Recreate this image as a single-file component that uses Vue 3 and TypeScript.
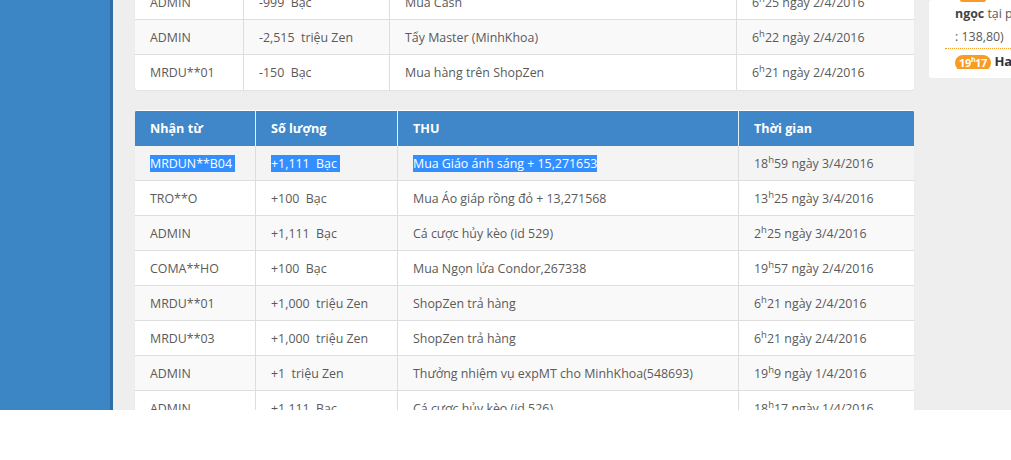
<script setup lang="ts">
interface Row { from: string; amount: string; note: string; h: string; m: string; date: string; selected?: boolean }

const topRows: Row[] = [
  { from: 'ADMIN', amount: '-999  Bạc', note: 'Mua Cash', h: '6', m: '25', date: '2/4/2016' },
  { from: 'ADMIN', amount: '-2,515  triệu Zen', note: 'Tẩy Master (MinhKhoa)', h: '6', m: '22', date: '2/4/2016' },
  { from: 'MRDU**01', amount: '-150  Bạc', note: 'Mua hàng trên ShopZen', h: '6', m: '21', date: '2/4/2016' },
]
const bottomRows: Row[] = [
  { from: 'MRDUN**B04', amount: '+1,111  Bạc', note: 'Mua Giáo ánh sáng + 15,271653', h: '18', m: '59', date: '3/4/2016', selected: true },
  { from: 'TRO**O', amount: '+100  Bạc', note: 'Mua Áo giáp rồng đỏ + 13,271568', h: '13', m: '25', date: '3/4/2016' },
  { from: 'ADMIN', amount: '+1,111  Bạc', note: 'Cá cược hủy kèo (id 529)', h: '2', m: '25', date: '3/4/2016' },
  { from: 'COMA**HO', amount: '+100  Bạc', note: 'Mua Ngọn lửa Condor,267338', h: '19', m: '57', date: '2/4/2016' },
  { from: 'MRDU**01', amount: '+1,000  triệu Zen', note: 'ShopZen trả hàng', h: '6', m: '21', date: '2/4/2016' },
  { from: 'MRDU**03', amount: '+1,000  triệu Zen', note: 'ShopZen trả hàng', h: '6', m: '21', date: '2/4/2016' },
  { from: 'ADMIN', amount: '+1  triệu Zen', note: 'Thưởng nhiệm vụ expMT cho MinhKhoa(548693)', h: '19', m: '9', date: '1/4/2016' },
  { from: 'ADMIN', amount: '+1,111  Bạc', note: 'Cá cược hủy kèo (id 526)', h: '18', m: '17', date: '1/4/2016' },
]
</script>

<template>
  <div class="viewport">
    <aside class="sidebar"></aside>
    <main class="content">
      <section class="card top-card">
        <div v-for="(r, i) in topRows" :key="i" class="row row-top" :class="{ odd: i === 1 }">
          <div class="cell">{{ r.from }}</div>
          <div class="cell">{{ r.amount }}</div>
          <div class="cell">{{ r.note }}</div>
          <div class="cell"><span>{{ r.h }}<sup>h</sup>{{ r.m }} ngày {{ r.date }}</span></div>
        </div>
      </section>
      <section class="card bottom-card">
        <div class="row row-bottom head">
          <div class="cell">Nhận từ</div>
          <div class="cell">Số lượng</div>
          <div class="cell">THU</div>
          <div class="cell">Thời gian</div>
        </div>
        <div v-for="(r, i) in bottomRows" :key="i" class="row row-bottom" :class="{ odd: i % 2 === 0 }">
          <div class="cell"><span :class="{ sel: r.selected }">{{ r.from }}&nbsp;</span></div>
          <div class="cell"><span :class="{ sel: r.selected }">{{ r.amount }}&nbsp;</span></div>
          <div class="cell"><span :class="{ sel: r.selected }">{{ r.note }}</span></div>
          <div class="cell"><span>{{ r.h }}<sup>h</sup>{{ r.m }} ngày {{ r.date }}</span></div>
        </div>
      </section>
    </main>
    <aside class="feed">
      <div class="feed-inner">
        <div class="stub"></div>
        <p class="line"><b>ngọc</b> tại phố</p>
        <p class="line">: 138,80)</p>
        <p class="entry"><span class="badge">19<sup>h</sup>17</span> <b>Hai</b></p>
      </div>
    </aside>
  </div>
</template>

<style>
html, body { margin: 0; background: #fff; }
</style>

<style scoped>
.viewport {
  height: 410px;
  width: 1011px;
  display: flex;
  align-items: flex-start;
  overflow: hidden;
  background: #eee;
  font-family: "Open Sans", "Noto Sans", sans-serif;
  font-size: 12.4px;
  color: #5a5a5a;
}
.sidebar {
  flex: 0 0 110px;
  align-self: stretch;
  background: #3d86c6;
  border-right: 3px solid #2d6ea6;
}
.content {
  flex: 0 0 779px;
  margin: -15px 0 0 22px;
  display: flex;
  flex-direction: column;
  gap: 20px;
}
.card {
  background: #fff;
  border-radius: 3px;
  box-shadow: 0 1px 1px #e2e2e2;
  overflow: hidden;
}
.bottom-card { padding-top: 1px; }
.row {
  display: grid;
  height: 35px;
  border-bottom: 1px solid #ddd;
  box-sizing: border-box;
}
.row-top { grid-template-columns: 109px 146px 347px 177px; }
.row-bottom { grid-template-columns: 121px 142px 341px 175px; }
.row.odd { background: #f9f9f9; }
.row-top:last-child { border-bottom: 0; }
.cell {
  display: flex;
  align-items: center;
  padding-left: 15px;
  border-right: 1px solid #ddd;
  white-space: pre;
}
.cell:last-child { border-right: 0; }
.cell sup { font-size: 9.5px; line-height: 0; vertical-align: 5px; }
.head {
  background: #3f87c8;
  color: #fff;
  font-weight: 700;
  font-size: 12.6px;
  border-bottom: 0;
}
.head .cell { border-right-color: #e6eef6; }
.row-bottom:nth-child(2) { background: #f4f4f4; }
.sel { background: #338fff; color: #fff; line-height: 17px; }
.feed {
  flex: 0 0 82px;
  margin-left: 15px;
  height: 78px;
  background: #fff;
  border-radius: 3px 0 0 3px;
  overflow: hidden;
}
.feed-inner {
  height: 69px;
  overflow: hidden;
  margin-left: 16px;
  white-space: nowrap;
  line-height: 23px;
}
.stub {
  width: 26px;
  height: 2px;
  margin-left: 15px;
  background: #f99b25;
  border-radius: 0 0 6px 6px;
}
.line { margin: 0 0 0 10px; width: 200px; }
.line b { color: #444; }
.entry {
  margin: 0;
  width: 200px;
  border-top: 1px dotted #f99b25;
  padding: 4px 0 0 10px;
  line-height: 16px;
  font-size: 13px;
  color: #333;
}
.badge {
  display: inline-block;
  background: #f99b25;
  color: #fff;
  font-size: 11px;
  font-weight: 700;
  line-height: 16px;
  height: 16px;
  width: 36px;
  text-align: center;
  border-radius: 8px;
  letter-spacing: -0.4px;
  vertical-align: -1px;
}
.badge sup { font-size: 7px; line-height: 0; }
</style>
